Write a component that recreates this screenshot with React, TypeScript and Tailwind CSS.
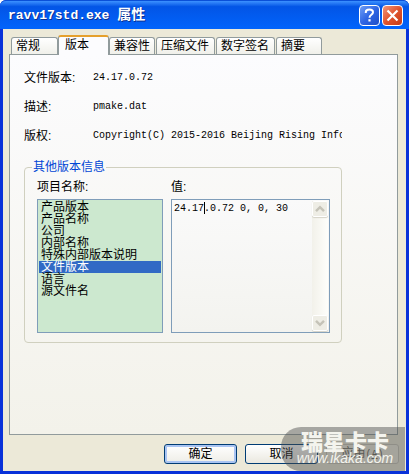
import React, { useState } from 'react';
import clsx from 'clsx';

const TABS = [
  { label: '常规', width: 'w-[47px]' },
  { label: '版本', width: 'w-[51px]' },
  { label: '兼容性', width: 'w-[46px]' },
  { label: '压缩文件', width: 'w-[59px]' },
  { label: '数字签名', width: 'w-[59px]' },
  { label: '摘要', width: 'w-[46px]' },
];

const DETAILS = [
  { label: '文件版本:', value: '24.17.0.72' },
  { label: '描述:', value: 'pmake.dat' },
  { label: '版权:', value: 'Copyright(C) 2015-2016 Beijing Rising Information' },
];

const ITEMS = ['产品版本', '产品名称', '公司', '内部名称', '特殊内部版本说明', '文件版本', '语言', '源文件名'];

const MONO = 'font-["Liberation_Mono","Noto_Sans_CJK_SC",monospace]';

const ScrollButton: React.FC<{ label: string; path: string }> = ({ label, path }) => (
  <button
    type="button"
    aria-label={label}
    className="flex h-4 w-4 items-center justify-center rounded-xs border border-white bg-[#eeede5] shadow-[0_1px_1px_#d5d3c8]"
  >
    <svg width="10" height="8" viewBox="0 0 10 8" fill="none" stroke="#c5c3b8" strokeWidth="2.4">
      <path d={path} />
    </svg>
  </button>
);

const TitleBar: React.FC = () => (
  <header className="flex h-[29px] items-center justify-between rounded-t-md border-t border-[#0a50d8] bg-linear-to-b from-[#3c91ff] from-0% via-[#0355e6] via-20% to-[#0164fc] pr-[6px] pl-2">
    <h1 className={clsx(MONO, 'text-[13px] font-bold whitespace-pre text-white [text-shadow:1px_1px_#0b2f91]')}>
      ravv17std.exe <span className="text-sm">属性</span>
    </h1>
    <div className="flex gap-[2px]">
      <button
        type="button"
        aria-label="帮助"
        className="flex h-[21px] w-[21px] items-center justify-center rounded-sm border border-white bg-linear-to-br from-[#6f9df5] via-[#2f65e4] to-[#1c4fc8]"
      >
        <svg width="13" height="15" viewBox="0 0 13 15" fill="none" stroke="white" strokeWidth="2">
          <path d="M2.8 5V4.2C2.8 2.5 4.2 1.5 6.3 1.5S10 2.6 10 4.2C10 6.8 6.5 6.6 6.5 9.7" />
          <path d="M6.5 11.2v2.3" strokeWidth="2.2" />
        </svg>
      </button>
      <button
        type="button"
        aria-label="关闭"
        className="flex h-[21px] w-[21px] items-center justify-center rounded-sm border border-white bg-linear-to-br from-[#f09478] via-[#e0532c] to-[#c43a15]"
      >
        <svg width="13" height="13" viewBox="0 0 13 13" fill="none" stroke="white" strokeWidth="2.2">
          <path d="M1.5 1.5l10 10M11.5 1.5l-10 10" />
        </svg>
      </button>
    </div>
  </header>
);

const TabStrip: React.FC<{ active: number; onSelect: (i: number) => void }> = ({ active, onSelect }) => (
  <div role="tablist" className="flex items-end pl-[2px]">
    {TABS.map((tab, i) => (
      <button
        key={tab.label}
        type="button"
        role="tab"
        aria-selected={i === active}
        onClick={() => onSelect(i)}
        className={clsx(
          tab.width,
          i > 2 && 'ml-px',
          'overflow-hidden rounded-t-[3px] border border-b-0 border-[#919b9c] text-left leading-4 whitespace-nowrap',
          i === active
            ? '-mb-px h-5 border-t-2 border-t-[#e5a02c] bg-[#fcfcfe] pb-1 pl-[6px]'
            : 'h-[17px] bg-linear-to-b from-white to-[#f0f0ea] pl-1',
        )}
      >
        {tab.label}
      </button>
    ))}
  </div>
);

const VersionInfo: React.FC = () => {
  const [selected, setSelected] = useState(5);

  return (
    <fieldset className="mt-[15px] mr-[55px] ml-[14px] rounded border border-[#d0d0bf] pr-[11px] pb-[9px] pl-3">
      <legend className="-ml-[5px] px-px leading-4 text-[#0046d5]">其他版本信息</legend>
      <div className="flex gap-2 pt-1">
        <div className="w-[126px]">
          <span id="items-label" className="block h-5 leading-4">
            项目名称:
          </span>
          <div
            role="listbox"
            aria-labelledby="items-label"
            className="h-[134px] overflow-hidden border border-[#7f9db9] bg-[#cce8cf] p-px"
          >
            {ITEMS.map((item, i) => (
              <button
                key={item}
                type="button"
                role="option"
                aria-selected={i === selected}
                onClick={() => setSelected(i)}
                className={clsx(
                  'block h-3 w-full pl-[2px] text-left leading-3',
                  i === selected && 'bg-[#316ac5] text-white',
                )}
              >
                {item}
              </button>
            ))}
          </div>
        </div>
        <div className="min-w-0 flex-1">
          <label htmlFor="value" className="block h-5 leading-4">
            值:
          </label>
          <div className="relative flex h-[134px] border border-[#7f9db9] bg-linear-to-b from-[#fafafa] to-[#f3f3ef] p-px">
            <textarea
              id="value"
              readOnly
              defaultValue="24.17.0.72 0, 0, 30"
              className={clsx(MONO, 'min-w-0 flex-1 resize-none overflow-hidden px-px text-[10px] leading-4 outline-none')}
            />
            <span className="absolute top-[2px] left-8 h-3 w-px bg-black" />
            <div className="flex w-4 flex-col justify-between bg-linear-to-r from-[#f2f1ea] to-[#fefefb]">
              <ScrollButton label="向上" path="M1 6.2l4-4 4 4" />
              <ScrollButton label="向下" path="M1 1.8l4 4 4-4" />
            </div>
          </div>
        </div>
      </div>
    </fieldset>
  );
};

const Watermark: React.FC = () => (
  <div className="pointer-events-none absolute right-1 bottom-[3px] flex h-11 w-[124px] flex-col items-center rounded-l-[20px] bg-[#4a4a4a]/45 pt-2 pl-1 text-[#f4f4ee]">
    <span className="text-[22px] leading-4 font-black">瑞星卡卡</span>
    <span className="font-['Liberation_Sans',sans-serif] text-sm leading-[14px] italic">www.ikaka.com</span>
  </div>
);

const App: React.FC = () => {
  const [tab, setTab] = useState(1);

  return (
    <main className="bg-white pr-px pb-[3px] font-['Liberation_Sans','Noto_Sans_CJK_SC',sans-serif] text-xs text-black">
      <div className="relative rounded-t-md bg-[#0831d9]">
        <TitleBar />
        <div className="px-[3px] pb-[3px]">
          <div className="bg-[#ece9d8] px-[6px] pt-[6px] pb-[7px]">
            <TabStrip active={tab} onSelect={setTab} />
            <section
              role="tabpanel"
              className="mr-[2px] border border-[#919b9c] bg-linear-to-b from-[#fcfcfe] to-[#f3f2ea] pt-[14px] pb-[91px]"
            >
              <dl className="flex flex-col gap-3 pl-[14px]">
                {DETAILS.map((row) => (
                  <div key={row.label} className="flex h-[17px] items-center">
                    <dt className="w-[69px] shrink-0">{row.label}</dt>
                    <dd className={clsx(MONO, 'w-[249px] overflow-hidden text-[10px] whitespace-nowrap')}>{row.value}</dd>
                  </div>
                ))}
              </dl>
              <VersionInfo />
            </section>
            <div className="mt-[9px] mr-px flex justify-end gap-2">
              <button
                type="button"
                className="h-5 w-[73px] rounded-[3px] border border-[#003c74] bg-linear-to-b from-white to-[#eeede6] leading-4 shadow-[inset_0_0_0_2px_#a9c4f2]"
              >
                确定
              </button>
              <button
                type="button"
                className="h-5 w-[73px] rounded-[3px] border border-[#003c74] bg-linear-to-b from-white to-[#eae8df] leading-4"
              >
                取消
              </button>
              <button
                type="button"
                disabled
                className="h-5 w-[73px] rounded-[3px] border border-[#c9c7ba] bg-[#f0eee1] leading-4 text-[#66655a]"
              >
                应用
                <span className={clsx(MONO, 'text-[10px]')}>
                  (<u>A</u>)
                </span>
              </button>
            </div>
          </div>
        </div>
        <Watermark />
      </div>
    </main>
  );
};

export default App;
